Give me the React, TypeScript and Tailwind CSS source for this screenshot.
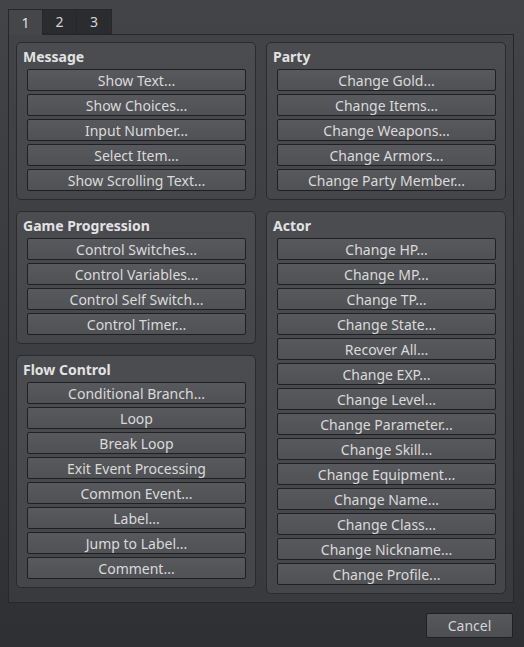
const groups = {
  message: ["Show Text...", "Show Choices...", "Input Number...", "Select Item...", "Show Scrolling Text..."],
  progression: ["Control Switches...", "Control Variables...", "Control Self Switch...", "Control Timer..."],
  flow: ["Conditional Branch...", "Loop", "Break Loop", "Exit Event Processing", "Common Event...", "Label...", "Jump to Label...", "Comment..."],
  party: ["Change Gold...", "Change Items...", "Change Weapons...", "Change Armors...", "Change Party Member..."],
  actor: [
    "Change HP...",
    "Change MP...",
    "Change TP...",
    "Change State...",
    "Recover All...",
    "Change EXP...",
    "Change Level...",
    "Change Parameter...",
    "Change Skill...",
    "Change Equipment...",
    "Change Name...",
    "Change Class...",
    "Change Nickname...",
    "Change Profile...",
  ],
}

function Group({ title, items }: { title: string; items: string[] }) {
  return (
    <div className="w-[240px] rounded-[5px] border border-[#2a2b2e] bg-gradient-to-b from-[#4b4c50] to-[#45464a] pb-[8px]">
      <div className="h-[26px] pt-[5px] pl-[6px] text-[14px] font-bold leading-[18px] text-[#e2e2e2]">{title}</div>
      <div className="flex flex-col gap-[3px] pl-[10px] pr-[9px]">
        {items.map((label) => (
          <button
            key={label}
            className="h-[22px] w-full rounded-[2px] border border-[#1f2023] bg-gradient-to-b from-[#58595d] to-[#505155] text-center text-[14px] leading-[21px] text-[#dadada]"
          >
            {label}
          </button>
        ))}
      </div>
    </div>
  )
}

export default function App() {
  return (
    <div
      className="flex h-[647px] w-[524px] flex-col bg-gradient-to-b from-[#434448] to-[#2f3034] pl-[8px] pr-[10px] pt-[9px]"
      style={{ fontFamily: '"Noto Sans", "DejaVu Sans", sans-serif' }}
    >
      <div className="flex">
        <div className="relative z-10 -mb-px flex h-[26px] w-[35px] items-center justify-center border border-b-0 border-[#26272a] bg-[#45464a] text-[14px] text-[#e0e0e0]">
          1
        </div>
        <div className="flex h-[25px] w-[34px] items-center justify-center border border-l-0 border-[#26272a] bg-[#2b2c2f] text-[14px] text-[#d6d6d6]">
          2
        </div>
        <div className="flex h-[25px] w-[35px] items-center justify-center border border-l-0 border-[#26272a] bg-[#2b2c2f] text-[14px] text-[#d6d6d6]">
          3
        </div>
      </div>
      <div className="flex h-[569px] gap-[10px] border border-[#26272a] bg-gradient-to-b from-[#424347] to-[#393a3e] pl-[7px] pt-[7px]">
        <div className="flex flex-col gap-[11px]">
          <Group title="Message" items={groups.message} />
          <Group title="Game Progression" items={groups.progression} />
          <Group title="Flow Control" items={groups.flow} />
        </div>
        <div className="flex flex-col gap-[11px]">
          <Group title="Party" items={groups.party} />
          <Group title="Actor" items={groups.actor} />
        </div>
      </div>
      <div className="flex justify-end pt-[10px] pr-[1px]">
        <button className="h-[25px] w-[87px] rounded-[2px] border border-[#1f2023] bg-gradient-to-b from-[#57585c] to-[#4d4e52] text-[14px] text-[#d4d4d4]">
          Cancel
        </button>
      </div>
    </div>
  )
}
